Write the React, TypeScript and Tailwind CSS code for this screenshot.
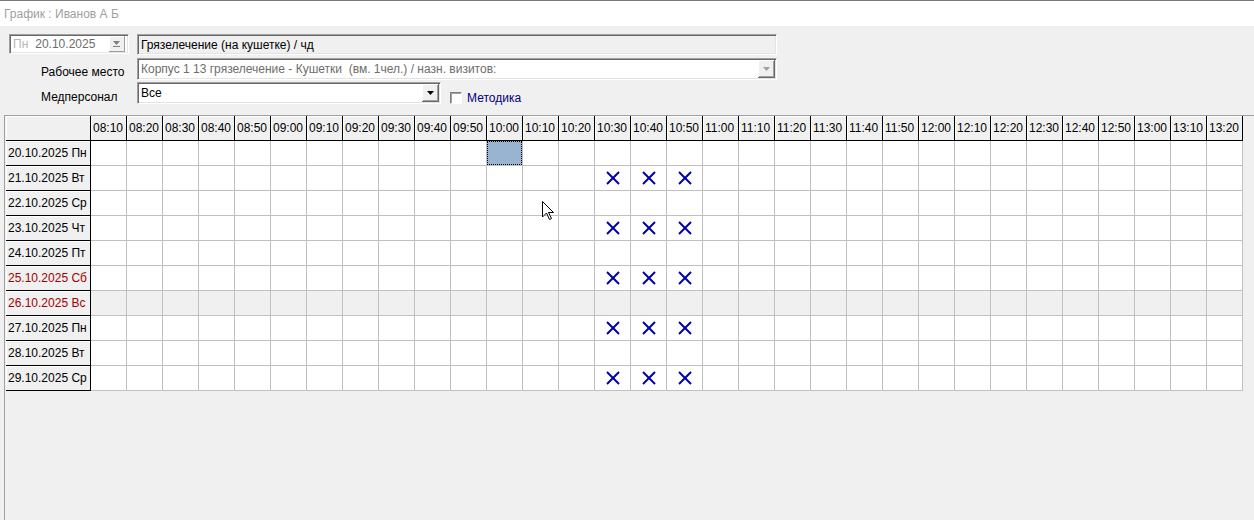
import React from 'react';

const times: string[] = [];
for (let m = 8 * 60 + 10; m <= 13 * 60 + 20; m += 10) {
    const h = String(Math.floor(m / 60)).padStart(2, '0');
    const mm = String(m % 60).padStart(2, '0');
    times.push(`${h}:${mm}`);
}

const days = [
    { label: '20.10.2025 Пн' },
    { label: '21.10.2025 Вт', busy: true },
    { label: '22.10.2025 Ср' },
    { label: '23.10.2025 Чт', busy: true },
    { label: '24.10.2025 Пт' },
    { label: '25.10.2025 Сб', busy: true, weekend: true },
    { label: '26.10.2025 Вс', weekend: true, off: true },
    { label: '27.10.2025 Пн', busy: true },
    { label: '28.10.2025 Вт' },
    { label: '29.10.2025 Ср', busy: true },
];

const busyTimes = ['10:30', '10:40', '10:50'];

const Arrow = ({ color = '#000' }: { color?: string }) => (
    <svg width="7" height="4" viewBox="0 0 7 4">
        <polygon points="0,0 7,0 3.5,4" fill={color} />
    </svg>
);

const DropButton = ({ disabled }: { disabled?: boolean }) => (
    <div className="w-[17px] h-full flex items-center justify-center bg-[#f0f0f0] border-r border-b border-[#696969] shadow-[inset_1px_1px_0_#ffffff,inset_-1px_-1px_0_#a0a0a0]">
        <Arrow color={disabled ? '#a0a0a0' : '#000'} />
    </div>
);

const Cross = () => (
    <svg width="14" height="14" viewBox="0 0 14 14">
        <line x1="1" y1="1" x2="13" y2="13" stroke="#0000a8" strokeWidth="2" />
        <line x1="13" y1="1" x2="1" y2="13" stroke="#0000a8" strokeWidth="2" />
    </svg>
);

const sunken = 'border border-t-[#a0a0a0] border-l-[#a0a0a0] border-r-[#ffffff] border-b-[#ffffff] shadow-[inset_1px_1px_0_#696969,inset_-1px_-1px_0_#e3e3e3]';

export default function App() {
    return (
        <div className="relative w-[1254px] h-[520px] overflow-hidden bg-[#f0f0f0] flex flex-col font-['Liberation_Sans',Arial,sans-serif] text-[12px] text-black">
            <div className="h-[26px] shrink-0 bg-white border-t border-[#7a7a7a] flex items-center pl-[4px] text-[#a0a0a0]">
                График : Иванов А Б
            </div>

            <div className="flex items-start h-[21px] mt-[8px] pl-[9px] gap-[8px]">
                <div className={`w-[120px] h-[20px] bg-white flex items-center ${sunken}`}>
                    <span className="pl-[3px] text-[#b8b8b8]">Пн</span>
                    <span className="pl-[7px] text-[#6d6d6d] flex-1">20.10.2025</span>
                    <div className="w-[16px] h-[16px] mr-[3px] flex flex-col items-center justify-center gap-[1px] bg-[#f0f0f0] border-r border-b border-[#a0a0a0] shadow-[inset_1px_1px_0_#ffffff]">
                        <Arrow color="#808080" />
                        <div className="w-[7px] h-px bg-[#808080]" />
                    </div>
                </div>
                <div className={`w-[640px] h-[21px] bg-[#f0f0f0] flex items-center pl-[3px] ${sunken}`}>
                    Грязелечение (на кушетке) / чд
                </div>
            </div>

            <div className="flex items-center h-[22px] mt-[3px]">
                <div className="w-[137px] pl-[41px] pt-[6px]">Рабочее место</div>
                <div className={`w-[640px] h-[22px] bg-white flex items-center ${sunken}`}>
                    <span className="flex-1 pl-[3px] text-[#6d6d6d] whitespace-pre">Корпус 1 13 грязелечение - Кушетки  (вм. 1чел.) / назн. визитов:</span>
                    <div className="h-[18px] mr-[1px]"><DropButton disabled /></div>
                </div>
            </div>

            <div className="flex items-center h-[22px] mt-[2px]">
                <div className="w-[137px] pl-[41px] pt-[7px]">Медперсонал</div>
                <div className={`w-[304px] h-[22px] bg-white flex items-center ${sunken}`}>
                    <span className="flex-1 pl-[3px]">Все</span>
                    <div className="h-[18px] mr-[1px]"><DropButton /></div>
                </div>
                <div className="ml-[9px] mt-[10px] w-[12px] h-[12px] bg-white border border-t-[#808080] border-l-[#808080] border-r-[#ffffff] border-b-[#ffffff] shadow-[inset_1px_1px_0_#a0a0a0]" />
                <div className="ml-[5px] mt-[10px] text-[#000080]">Методика</div>
            </div>

            <div className="flex-1 mt-[11px] ml-[4px] border-l border-t border-[#a0a0a0] pl-[1px]">
                <div className="grid grid-cols-[85px_repeat(32,36px)] auto-rows-[25px] w-max">
                    <div className="bg-[#f0f0f0] border-r border-b border-black shadow-[inset_1px_1px_0_#ffffff]" />
                    {times.map((t) => (
                        <div key={t} className="bg-[#f0f0f0] border-r border-b border-black shadow-[inset_1px_1px_0_#ffffff] flex items-center pl-[2px]">
                            {t}
                        </div>
                    ))}
                    {days.map((d, ri) => (
                        <React.Fragment key={d.label}>
                            <div className={`bg-[#f0f0f0] border-r border-b border-black shadow-[inset_1px_1px_0_#ffffff] flex items-center pl-[2px] whitespace-nowrap overflow-hidden ${d.weekend ? 'text-[#a00000]' : ''}`}>
                                {d.label}
                            </div>
                            {times.map((t) => {
                                const selected = ri === 0 && t === '10:00';
                                const cross = d.busy && busyTimes.includes(t);
                                return (
                                    <div key={t} className={`border-r border-b border-[#c0c0c0] flex items-center justify-center ${d.off ? 'bg-[#f0f0f0]' : 'bg-white'}`}>
                                        {selected && <div className="w-full h-full bg-[#98b4d0] border border-dotted border-black" />}
                                        {cross && <Cross />}
                                    </div>
                                );
                            })}
                        </React.Fragment>
                    ))}
                </div>
            </div>

            <svg className="absolute left-[542px] top-[201px]" width="13" height="20" viewBox="0 0 13 20">
                <path d="M0.5 0.5 L0.5 16 L4.5 12 L7.5 18.5 L9.5 17.5 L6.5 11.5 L11.5 11.5 Z" fill="#ffffff" stroke="#000000" strokeWidth="1" strokeLinejoin="miter" />
            </svg>
        </div>
    );
}
